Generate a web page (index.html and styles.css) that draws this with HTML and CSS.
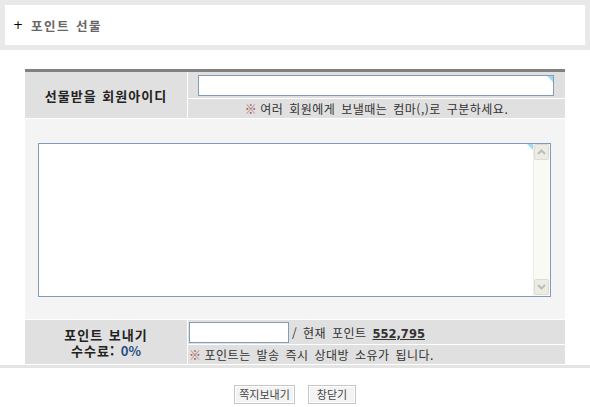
FILE: index.html
```html
<!DOCTYPE html>
<html lang="ko">
<head>
<meta charset="UTF-8">
<title>포인트 선물</title>
<link rel="stylesheet" href="styles.css">
</head>
<body>

<div class="top">
  <div class="top-box">
    <span class="plus">+</span>
    <span class="title">포인트 선물</span>
  </div>
</div>

<div class="form">
  <div class="row row-id">
    <div class="label">선물받을 회원아이디</div>
    <div class="field">
      <div class="sub sub-input pad-id">
        <span class="inp inp-id"><i class="ime"></i></span>
      </div>
      <div class="sub sub-hint center"><span class="mark">※</span> 여러 회원에게 보낼때는 컴마(,)로 구분하세요.</div>
    </div>
  </div>

  <div class="row-memo">
    <div class="memo">
      <div class="memo-text"><i class="ime"></i></div>
      <div class="scroll">
        <span class="sbtn">
          <svg width="9" height="6" viewBox="0 0 9 6"><path d="M1 5 L4.5 1.5 L8 5" fill="none" stroke="#bdbdb4" stroke-width="2"/></svg>
        </span>
        <span class="sbtn">
          <svg width="9" height="6" viewBox="0 0 9 6"><path d="M1 1 L4.5 4.5 L8 1" fill="none" stroke="#bdbdb4" stroke-width="2"/></svg>
        </span>
      </div>
    </div>
  </div>

  <div class="row row-point">
    <div class="label two">
      <span class="line">포인트 보내기</span>
      <span class="line">수수료: <em class="fee">0%</em></span>
    </div>
    <div class="field">
      <div class="sub sub-input pad-point">
        <span class="inp inp-point"></span>
        <span class="now">/ 현재 포인트 <u class="num">552,795</u></span>
      </div>
      <div class="sub sub-hint left"><span class="mark">※</span> 포인트는 발송 즉시 상대방 소유가 됩니다.</div>
    </div>
  </div>
</div>

<div class="rule"></div>

<div class="buttons">
  <button class="btn btn-send">쪽지보내기</button>
  <button class="btn btn-close">창닫기</button>
</div>

</body>
</html>
```

FILE: styles.css
```css
body {
  margin: 0;
  background: #fff;
  font-family: "Noto Sans CJK KR", "Noto Sans", sans-serif;
  font-size: 12px;
  color: #333;
}

.top {
  background: #e9e9e9;
  padding: 5px 5px;
}
.top-box {
  background: #fff;
  height: 40px;
  display: flex;
  align-items: center;
  padding-left: 8px;
}
.plus {
  font-family: "DejaVu Sans", sans-serif;
  color: #000;
  font-size: 12px;
  width: 18px;
}
.title {
  font-weight: bold;
  color: #666;
  letter-spacing: 1.5px;
  word-spacing: 1px;
  font-size: 12.5px;
}

.form {
  margin: 19px 25px 0;
  border-top: 3px solid #808080;
  display: flex;
  flex-direction: column;
  gap: 1px;
  background: #fff;
}

.row {
  display: grid;
  grid-template-columns: 162px 377px;
  column-gap: 1px;
}
.label {
  background: #e0e0e0;
  display: flex;
  align-items: center;
  justify-content: center;
  font-weight: bold;
  font-size: 13px;
  letter-spacing: 1px;
  word-spacing: 1px;
  color: #222;
}
.label.two {
  flex-direction: column;
  padding-top: 1px;
}
.line {
  display: block;
  height: 16px;
  line-height: 16px;
}
.fee {
  font-style: normal;
  color: #1f4f82;
  letter-spacing: 0;
}

.field {
  display: flex;
  flex-direction: column;
  gap: 1px;
}
.sub {
  background: #e0e0e0;
  display: flex;
  align-items: center;
}
.sub-input.pad-id {
  height: 26px;
  padding: 3px 0 2px 10px;
  box-sizing: border-box;
}
.sub-input.pad-point {
  height: 24px;
  padding: 1px 0 1px 1px;
  box-sizing: border-box;
}
.sub-hint {
  height: 19px;
  color: #333;
  letter-spacing: 0.5px;
  word-spacing: 2px;
}
.sub-hint.center {
  justify-content: center;
}
.sub-hint.left {
  padding-left: 1px;
}
.mark {
  color: #a85050;
  font-size: 12px;
  margin-right: 3px;
}

.inp {
  position: relative;
  display: block;
  background: #fff;
  border: 1px solid #7f9db9;
  box-sizing: border-box;
}
.inp-id {
  width: 356px;
  height: 21px;
}
.inp-point {
  width: 100px;
  height: 21px;
}
.ime {
  position: absolute;
  top: 0;
  right: 0;
  width: 0;
  height: 0;
  border-top: 6px solid #9edcf4;
  border-left: 6px solid transparent;
}

.now {
  margin-left: 3px;
  color: #333;
  letter-spacing: 0.5px;
  word-spacing: 2px;
}
.num {
  font-family: "DejaVu Sans", sans-serif;
  font-weight: bold;
  font-size: 11.5px;
  letter-spacing: 0;
  color: #333;
}

.row-memo {
  background: #f4f4f4;
  height: 200px;
  padding: 24px 14px 22px 13px;
  box-sizing: border-box;
}
.memo {
  display: flex;
  width: 513px;
  height: 154px;
  border: 1px solid #7f9db9;
  box-sizing: border-box;
  background: #fff;
}
.memo-text {
  position: relative;
  flex: 1;
}
.scroll {
  width: 17px;
  background: #fafaf4;
  border-left: 1px solid #eeeee6;
  box-sizing: border-box;
  display: flex;
  flex-direction: column;
  justify-content: space-between;
  padding: 0 1px 1px 0;
}
.sbtn {
  display: flex;
  align-items: center;
  justify-content: center;
  height: 16px;
  background: #ececE4;
  border: 1px solid #dcdcd4;
  border-radius: 2px;
  box-sizing: border-box;
}

.rule {
  margin-top: 1px;
  height: 3px;
  background: #e4e4e4;
}

.buttons {
  display: flex;
  justify-content: center;
  gap: 13px;
  margin-top: 17px;
}
.btn {
  height: 19px;
  padding: 0;
  font-family: "Noto Sans CJK KR", sans-serif;
  font-size: 11px;
  color: #444;
  background: #f3f3f3;
  border: 1px solid #c6c6c6;
  box-shadow: inset 0 0 0 1px #fff;
  line-height: 15px;
}
.btn-send {
  width: 61px;
}
.btn-close {
  width: 48px;
}
```
